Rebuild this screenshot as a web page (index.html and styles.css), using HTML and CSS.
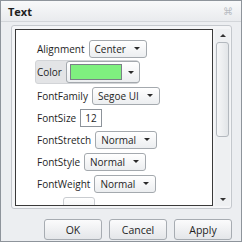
FILE: index.html
```html
<!DOCTYPE html>
<html lang="en">
<head>
    <meta charset="UTF-8">
    <title>Text</title>
    <link rel="stylesheet" href="styles.css">
</head>
<body>
    <div class="dialog">
        <div class="titlebar">
            <span class="title">Text</span>
            <span class="close">&#8984;</span>
        </div>

        <div class="frame">
            <div class="panel">
                <div class="row">
                    <span class="label">Alignment</span>
                    <span class="combo">Center <i class="arrow"></i></span>
                </div>
                <div class="row row-selected">
                    <span class="label">Color</span>
                    <span class="combo combo-color"><span class="swatch"></span><i class="arrow"></i></span>
                </div>
                <div class="row">
                    <span class="label">FontFamily</span>
                    <span class="combo">Segoe UI <i class="arrow"></i></span>
                </div>
                <div class="row">
                    <span class="label">FontSize</span>
                    <span class="textbox">12</span>
                </div>
                <div class="row">
                    <span class="label">FontStretch</span>
                    <span class="combo">Normal <i class="arrow"></i></span>
                </div>
                <div class="row">
                    <span class="label">FontStyle</span>
                    <span class="combo">Normal <i class="arrow"></i></span>
                </div>
                <div class="row">
                    <span class="label">FontWeight</span>
                    <span class="combo">Normal <i class="arrow"></i></span>
                </div>
                <!-- next row, only its top edge shows -->
                <div class="row row-peek">
                    <span class="combo combo-peek"></span>
                </div>
            </div>

            <div class="scrollbar">
                <i class="sb-up"></i>
                <div class="sb-track"><div class="sb-thumb"></div></div>
                <i class="sb-down"></i>
            </div>
        </div>

        <div class="buttons">
            <button class="btn">OK</button>
            <button class="btn">Cancel</button>
            <button class="btn">Apply</button>
        </div>
    </div>
</body>
</html>
```

FILE: styles.css
```css
/* Dialog */
body {
    margin: 0;
    background: #ffffff;
    font-family: "Open Sans", "DejaVu Sans", sans-serif;
    font-size: 10px;
    color: #1e1e1e;
}

.dialog {
    width: 240px;
    height: 240px;
    border: 1px solid #8e949b;
    background: #eceef1;
    display: flex;
    flex-direction: column;
}

.titlebar {
    height: 20px;
    display: flex;
    align-items: center;
    justify-content: space-between;
    padding: 0 8px 0 7px;
    background: linear-gradient(#f8f9fa, #e9ebee);
    border-bottom: 1px solid #d3d6da;
}

.title {
    font-weight: bold;
    font-size: 11px;
}

.close {
    color: #b8bcc2;
    font-size: 10px;
}

/* Content frame */
.frame {
    margin: 3px 9px 0 10px;
    height: 177px;
    border: 1px solid #c4c8cd;
    border-radius: 3px;
    background: #f4f5f7;
    padding: 3px 1px 2px 3px;
    display: flex;
    gap: 2px;
}

.panel {
    flex: 1;
    border: 1px solid #3a3a3a;
    background: #ffffff;
    padding: 9px 0 0 19px;
    display: flex;
    flex-direction: column;
    gap: 3px;
    overflow: hidden;
}

.row {
    height: 19px;
    display: flex;
    align-items: center;
    gap: 4px;
    padding: 0 2px;
    flex-shrink: 0;
}

.row-selected {
    height: 24px;
    width: 104px;
    margin: -1px 0 -1px;
    background: #e3e4e6;
    border: 1px solid #d2d4d7;
    border-radius: 3px;
    padding: 0 2px 0 1px;
    box-sizing: border-box;
}

.row-peek {
    padding-left: 28px;
    align-items: flex-start;
    margin-top: 1px;
}

.combo {
    height: 16px;
    display: inline-flex;
    align-items: center;
    gap: 8px;
    padding: 0 6px 0 5px;
    border: 1px solid #a4a9ae;
    border-radius: 3px;
    background: linear-gradient(#ffffff, #eceef0);
    white-space: nowrap;
}

.combo-color {
    height: 20px;
    padding: 0 5px 0 3px;
    gap: 6px;
}

.combo-peek {
    width: 30px;
    padding: 0;
    border-color: #c9ccd0;
}

.swatch {
    width: 50px;
    height: 14px;
    background: #7ff07f;
    border: 1px solid #7a8087;
}

.arrow {
    width: 0;
    height: 0;
    border-left: 3px solid transparent;
    border-right: 3px solid transparent;
    border-top: 3px solid #2a2a2a;
}

.textbox {
    height: 16px;
    padding: 0 4px;
    display: inline-flex;
    align-items: center;
    border: 1px solid #8d939a;
    background: #ffffff;
}

/* Scrollbar */
.scrollbar {
    width: 15px;
    display: flex;
    flex-direction: column;
    align-items: center;
    background: #eef0f2;
}

.sb-up,
.sb-down {
    width: 0;
    height: 0;
    margin: 5px 0;
    border-left: 3px solid transparent;
    border-right: 3px solid transparent;
}

.sb-up {
    border-bottom: 3px solid #333;
}

.sb-down {
    border-top: 3px solid #333;
}

.sb-track {
    flex: 1;
    width: 100%;
}

.sb-thumb {
    height: 93px;
    margin: 0 1px;
    border: 1px solid #b3b8be;
    border-radius: 3px;
    background: linear-gradient(90deg, #f6f7f8, #e2e5e8);
}

/* Buttons */
.buttons {
    display: flex;
    justify-content: flex-end;
    gap: 7px;
    padding: 10px 9px 0 0;
}

.btn {
    width: 58px;
    height: 21px;
    font-family: inherit;
    font-size: 10.5px;
    color: #1e1e1e;
    border: 1px solid #a7acb2;
    border-radius: 3px;
    background: linear-gradient(#fbfbfc, #e4e6e9);
}
```
